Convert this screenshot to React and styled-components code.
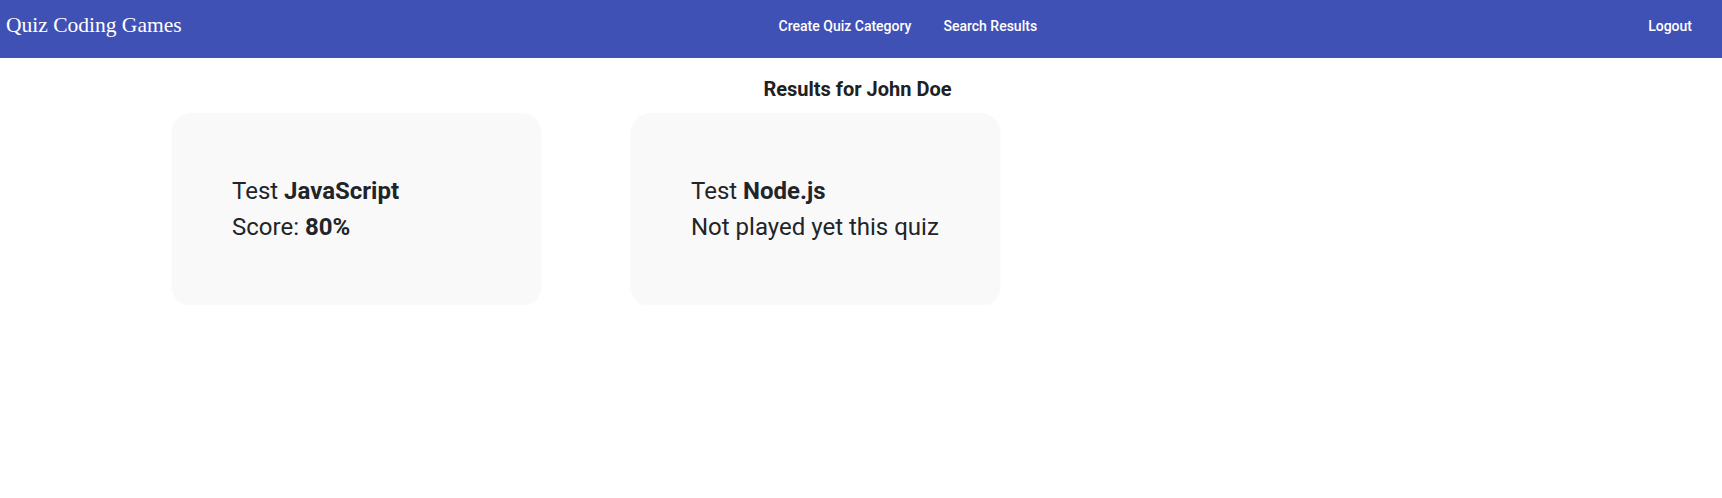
import React from 'react';
import styled, { createGlobalStyle } from 'styled-components';

const GlobalStyle = createGlobalStyle`
  body {
    margin: 0;
    background: #ffffff;
    font-family: Roboto, "Liberation Sans", sans-serif;
    color: #212121;
  }
`;

const NavBar = styled.header`
  display: flex;
  align-items: center;
  box-sizing: border-box;
  height: 58px;
  padding: 0 22px 7px 6px;
  background-color: #3f51b5;
  color: #ffffff;
`;

const Brand = styled.div`
  font-family: "Liberation Serif", Georgia, serif;
  font-size: 21.5px;
  line-height: 1;
`;

const NavLinks = styled.nav`
  display: flex;
  gap: 16px;
  margin-left: auto;
  margin-right: 6px;
`;

const NavButton = styled.a`
  padding: 6px 8px;
  font-size: 14px;
  font-weight: 500;
  color: #ffffff;
  text-decoration: none;
  cursor: pointer;
  margin-left: ${(p) => (p.$push ? 'auto' : '0')};
`;

const Heading = styled.h2`
  margin: 19px 0 12px;
  padding-right: 7px;
  text-align: center;
  font-size: 20px;
  line-height: 24px;
  font-weight: 700;
  color: #212121;
`;

const CardList = styled.div`
  display: flex;
  gap: 90px;
  padding: 0 172px;
`;

const Card = styled.div`
  display: flex;
  flex-direction: column;
  justify-content: center;
  width: 369px;
  height: 192px;
  box-sizing: border-box;
  padding: 0 60px;
  background: #f9f9f9;
  border-radius: 20px;
  box-shadow: 0 1px 3px rgba(0, 0, 0, 0.04);
`;

const Line = styled.div`
  font-size: 24px;
  line-height: 36px;
  color: #212529;
  b {
    font-weight: 700;
  }
`;

const results = [
  { id: 1, quiz: 'JavaScript', score: 80 },
  { id: 2, quiz: 'Node.js', score: null },
];

const ResultCard = ({ quiz, score }) => (
  <Card>
    <Line>
      Test <b>{quiz}</b>
    </Line>
    {score === null ? (
      <Line>Not played yet this quiz</Line>
    ) : (
      <Line>
        Score: <b>{score}%</b>
      </Line>
    )}
  </Card>
);

const App = () => (
  <>
    <GlobalStyle />
    <NavBar>
      <Brand>Quiz Coding Games</Brand>
      <NavLinks>
        <NavButton>Create Quiz Category</NavButton>
        <NavButton>Search Results</NavButton>
      </NavLinks>
      <NavButton $push>Logout</NavButton>
    </NavBar>
    <Heading>Results for John Doe</Heading>
    <CardList>
      {results.map((r) => (
        <ResultCard key={r.id} quiz={r.quiz} score={r.score} />
      ))}
    </CardList>
  </>
);

export default App;
